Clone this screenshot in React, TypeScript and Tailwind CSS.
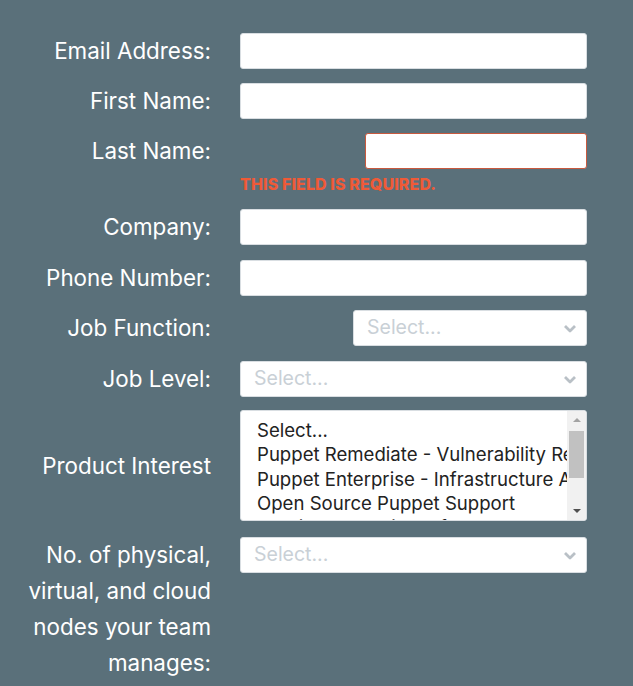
import React from "react";

const font = { fontFamily: "Inter, 'Noto Sans', sans-serif" };

function Label({ children }: { children: React.ReactNode }) {
  return (
    <div className="w-[191px] shrink-0 text-right text-[22.4px] leading-[36px] text-white">
      {children}
    </div>
  );
}

function TextBox({ className = "", error = false }: { className?: string; error?: boolean }) {
  return (
    <div
      className={`h-[36px] rounded-[3px] bg-white ${
        error ? "border-[1.5px] border-[#c8593e]" : "border border-[#d9dee2]"
      } ${className}`}
    />
  );
}

function Chevron() {
  return (
    <svg width="14" height="9" viewBox="0 0 14 9" className="shrink-0">
      <path d="M2 2 L7 7 L12 2" fill="none" stroke="#b9c0c6" strokeWidth="2.8" strokeLinejoin="round" />
    </svg>
  );
}

function SelectBox({ className = "" }: { className?: string }) {
  return (
    <div
      className={`flex h-[36px] items-center justify-between rounded-[3px] border border-[#d9dee2] bg-white pl-[13px] pr-[9px] ${className}`}
    >
      <span className="text-[19.5px] text-[#c9d0d6]">Select...</span>
      <Chevron />
    </div>
  );
}

const products = [
  "Select...",
  "Puppet Remediate - Vulnerability Remediation",
  "Puppet Enterprise - Infrastructure Automation",
  "Open Source Puppet Support",
  "Continuous Delivery for Puppet Enterprise",
];

function MultiSelect() {
  return (
    <div className="flex h-[111px] w-[347px] overflow-hidden rounded-[3px] border border-[#d9dee2] bg-white">
      <div className="min-w-0 flex-1 overflow-hidden pl-[16px] pt-[7px]">
        {products.map((p) => (
          <div key={p} className="whitespace-nowrap text-[18.6px] leading-[24.3px] text-[#222]">
            {p}
          </div>
        ))}
      </div>
      <div className="flex w-[19px] shrink-0 flex-col items-center bg-[#f1f1f1] py-[2px]">
        <svg width="10" height="14" viewBox="0 0 10 14">
          <path d="M1 9 L5 5 L9 9 Z" fill="#a3a3a3" />
        </svg>
        <div className="mt-[4px] h-[47px] w-[15px] bg-[#c1c1c1]" />
        <div className="flex-1" />
        <svg width="10" height="14" viewBox="0 0 10 14">
          <path d="M1 5 L5 9 L9 5 Z" fill="#505050" />
        </svg>
      </div>
    </div>
  );
}

export default function App() {
  return (
    <div className="min-h-[686px] w-full bg-[#5a707a] pt-[33px]" style={font}>
      <div className="flex flex-col pl-[20px]">
        <div className="flex items-center gap-[29px]">
          <Label>Email Address:</Label>
          <TextBox className="w-[347px]" />
        </div>
        <div className="mt-[14px] flex items-center gap-[29px]">
          <Label>First Name:</Label>
          <TextBox className="w-[347px]" />
        </div>
        <div className="mt-[14px] flex items-start gap-[29px]">
          <Label>Last Name:</Label>
          <div className="flex w-[347px] flex-col">
            <TextBox error className="ml-auto w-[222px]" />
            <div className="mt-[7px] text-[16px] font-extrabold uppercase leading-[16px] tracking-[0.1px] text-[#ef5a37]">
              This field is required.
            </div>
          </div>
        </div>
        <div className="mt-[17px] flex items-center gap-[29px]">
          <Label>Company:</Label>
          <TextBox className="w-[347px]" />
        </div>
        <div className="mt-[15px] flex items-center gap-[29px]">
          <Label>Phone Number:</Label>
          <TextBox className="w-[347px]" />
        </div>
        <div className="mt-[14px] flex items-center gap-[29px]">
          <Label>Job Function:</Label>
          <div className="flex w-[347px] justify-end">
            <SelectBox className="w-[234px]" />
          </div>
        </div>
        <div className="mt-[15px] flex items-center gap-[29px]">
          <Label>Job Level:</Label>
          <SelectBox className="w-[347px]" />
        </div>
        <div className="mt-[13px] flex items-center gap-[29px]">
          <Label>Product Interest</Label>
          <MultiSelect />
        </div>
        <div className="mt-[16px] flex items-start gap-[29px]">
          <Label>No. of physical, virtual, and cloud nodes your team manages:</Label>
          <SelectBox className="w-[347px]" />
        </div>
      </div>
    </div>
  );
}
